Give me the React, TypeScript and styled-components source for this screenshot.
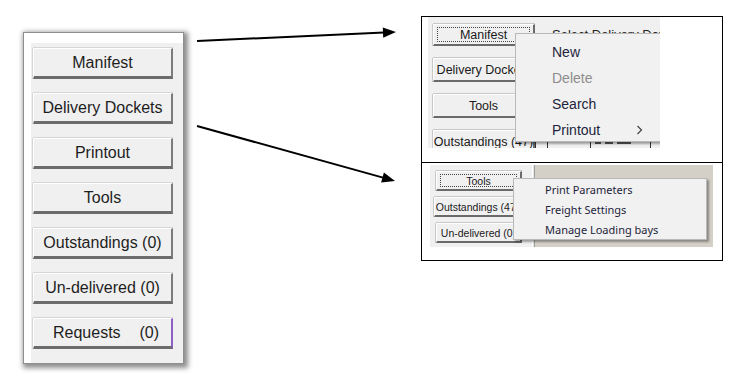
import React from 'react';
import styled, { createGlobalStyle } from 'styled-components';

const GlobalStyle = createGlobalStyle`
  html, body {
    margin: 0;
    padding: 0;
    background: #ffffff;
  }
  body {
    font-family: "Liberation Sans", Arial, sans-serif;
  }
`;

const Page = styled.div`
  width: 739px;
  height: 387px;
  box-sizing: border-box;
  padding: 16px 0 0 24px;
  display: flex;
  align-items: flex-start;
  overflow: hidden;
`;

/* ---------- left: the big button panel ---------- */

const Frame = styled.div`
  margin-top: 17px;
  width: 159px;
  height: 330px;
  box-sizing: border-box;
  background: #f0f0f0;
  border-top: 10px solid #ffffff;
  border-left: 7px solid #ffffff;
  box-shadow: 0 0 0 1px #8e8e8e, 2px 2px 5px 3px rgba(0, 0, 0, 0.45);
  padding: 5px 0 0 2px;
  display: flex;
  flex-direction: column;
  gap: 14px;
`;

const BigButton = styled.div<{ $accent?: string; $split?: boolean }>`
  width: 140px;
  height: 31px;
  box-sizing: border-box;
  background: #f0f0f0;
  border-top: 1px solid #ffffff;
  border-left: 1px solid #ffffff;
  border-right: 2px solid ${p => p.$accent || '#7c7c7c'};
  border-bottom: 3px solid #6c6c6c;
  box-shadow: 0 -1px 0 #d6d6d6, -1px 0 0 #d6d6d6;
  display: flex;
  align-items: center;
  justify-content: ${p => (p.$split ? 'space-between' : 'center')};
  padding: ${p => (p.$split ? '0 12px 0 19px' : '0')};
  font-size: 16px;
  color: #1e1e1e;
  white-space: nowrap;
`;

/* ---------- middle: arrows ---------- */

const Arrows = styled.svg`
  flex-shrink: 0;
`;

/* ---------- right: the two screenshots ---------- */

const Shots = styled.div`
  width: 302px;
  display: flex;
  flex-direction: column;
`;

const ShotBox = styled.div<{ $h: number; $first?: boolean }>`
  height: ${p => p.$h}px;
  box-sizing: border-box;
  border: 1px solid #000000;
  border-top: ${p => (p.$first ? '1px solid #000000' : 'none')};
`;

const Crop = styled.div<{ $w: number; $h: number; $ml: number; $mt: number }>`
  position: relative;
  overflow: hidden;
  width: ${p => p.$w}px;
  height: ${p => p.$h}px;
  margin-left: ${p => p.$ml}px;
  margin-top: ${p => p.$mt}px;
  background: #f0f0f0;
  display: flex;
`;

const ButtonCol = styled.div<{ $pad: string; $gap: number; $w: number }>`
  width: ${p => p.$w}px;
  flex-shrink: 0;
  box-sizing: border-box;
  padding: ${p => p.$pad};
  display: flex;
  flex-direction: column;
  gap: ${p => p.$gap}px;
`;

const SmallButton = styled.div<{ $w: number; $h: number; $size: number; $indent?: number }>`
  position: relative;
  width: ${p => p.$w}px;
  height: ${p => p.$h}px;
  margin-left: ${p => p.$indent || 0}px;
  box-sizing: border-box;
  flex-shrink: 0;
  background: #f0f0f0;
  border-top: 1px solid #ffffff;
  border-left: 1px solid #ffffff;
  border-right: 2px solid #6a6a6a;
  border-bottom: 2px solid #6a6a6a;
  box-shadow: 0 -1px 0 #c8c8c8, -1px 0 0 #c8c8c8;
  display: flex;
  align-items: center;
  justify-content: center;
  font-size: ${p => p.$size}px;
  color: #1a1a1a;
  white-space: nowrap;
  overflow: hidden;
`;

const Focus = styled.span`
  position: absolute;
  inset: 2px 3px 2px 3px;
  border: 1px dotted #444444;
  pointer-events: none;
`;

const RightPane = styled.div`
  flex: 1;
  display: flex;
  flex-direction: column;
  justify-content: space-between;
`;

const DateLabel = styled.div`
  margin: 10px 0 0 17px;
  font-size: 13px;
  color: #222222;
  white-space: nowrap;
`;

const TableStrip = styled.div`
  height: 6px;
  display: flex;
`;

const StripCell = styled.div<{ $w: number; $ink?: boolean }>`
  width: ${p => p.$w}px;
  height: 6px;
  box-sizing: border-box;
  border-left: 1px solid #333333;
  background: ${p =>
    p.$ink
      ? 'linear-gradient(90deg, transparent 4px, #555 4px, #555 10px, transparent 10px, transparent 14px, #555 14px, #555 22px, transparent 22px, transparent 26px, #555 26px, #555 40px, transparent 40px)'
      : 'transparent'};
  background-size: 100% 2px;
  background-repeat: no-repeat;
`;

const Menu = styled.div<{ $left: number; $top: number; $w: number; $h: number; $pad: number }>`
  position: absolute;
  left: ${p => p.$left}px;
  top: ${p => p.$top}px;
  width: ${p => p.$w}px;
  height: ${p => p.$h}px;
  box-sizing: border-box;
  padding-top: ${p => p.$pad}px;
  background: #f1f1f1;
  border: 1px solid #b8b8b8;
  box-shadow: 2px 2px 2px rgba(0, 0, 0, 0.35);
`;

const MenuItem = styled.div<{ $h: number; $indent: number; $size: number; $muted?: boolean; $font?: string }>`
  height: ${p => p.$h}px;
  display: flex;
  align-items: center;
  padding-left: ${p => p.$indent}px;
  font-family: ${p => p.$font || '"Liberation Sans", Arial, sans-serif'};
  font-size: ${p => p.$size}px;
  color: ${p => (p.$muted ? '#8d8d8d' : '#1d1f3c')};
  white-space: nowrap;
`;

const SubArrow = styled.svg`
  margin-left: 36px;
`;

const Divider = styled.div`
  width: 3px;
  flex-shrink: 0;
  border-left: 1px solid #ffffff;
  border-right: 1px solid #a0a0a0;
  box-sizing: border-box;
  background: #e4e4e4;
`;

const GreyArea = styled.div`
  flex: 1;
  background: #d4d0c8;
`;

const topMenu = [
  { label: 'New' },
  { label: 'Delete', muted: true },
  { label: 'Search' },
  { label: 'Printout', sub: true },
];

const toolMenu = ['Print Parameters', 'Freight Settings', 'Manage Loading bays'];

const App = () => {
  return (
    <>
      <GlobalStyle />
      <Page>
        <Frame>
          <BigButton>Manifest</BigButton>
          <BigButton>Delivery Dockets</BigButton>
          <BigButton>Printout</BigButton>
          <BigButton>Tools</BigButton>
          <BigButton>Outstandings (0)</BigButton>
          <BigButton>Un-delivered (0)</BigButton>
          <BigButton $accent="#8b5fc4" $split>
            <span>Requests</span>
            <span>(0)</span>
          </BigButton>
        </Frame>

        <Arrows width="238" height="180" viewBox="0 0 238 180">
          <line x1="14" y1="25" x2="201" y2="16.6" stroke="#000" strokeWidth="2" />
          <polygon points="213,16 200.2,21.8 199.8,11.4" fill="#000" />
          <line x1="14" y1="110" x2="200" y2="161.6" stroke="#000" strokeWidth="2" />
          <polygon points="212,165 198.1,166.5 200.9,156.5" fill="#000" />
        </Arrows>

        <Shots>
          <ShotBox $h={147} $first>
            <Crop $w={232} $h={131} $ml={6} $mt={0}>
              <ButtonCol $w={107} $pad="7px 0 0 5px" $gap={12}>
                <SmallButton $w={102} $h={22} $size={12.5}>
                  Manifest
                  <Focus />
                </SmallButton>
                <SmallButton $w={102} $h={24} $size={12.5}>
                  Delivery Dockets
                </SmallButton>
                <SmallButton $w={102} $h={24} $size={12.5}>
                  Tools
                </SmallButton>
                <SmallButton $w={102} $h={24} $size={12.5}>
                  Outstandings (47)
                </SmallButton>
              </ButtonCol>
              <RightPane>
                <DateLabel>Select Delivery Date</DateLabel>
                <TableStrip>
                  <StripCell $w={12} />
                  <StripCell $w={43} />
                  <StripCell $w={60} $ink />
                  <StripCell $w={10} />
                </TableStrip>
              </RightPane>
              <Menu $left={87} $top={16} $w={170} $h={109} $pad={5}>
                {topMenu.map(item => (
                  <MenuItem key={item.label} $h={26} $indent={36} $size={14} $muted={item.muted}>
                    {item.label}
                    {item.sub && (
                      <SubArrow width="7" height="10" viewBox="0 0 7 10">
                        <polyline points="1.5,1 5.5,5 1.5,9" fill="none" stroke="#444" strokeWidth="1.2" />
                      </SubArrow>
                    )}
                  </MenuItem>
                ))}
              </Menu>
            </Crop>
          </ShotBox>

          <ShotBox $h={98}>
            <Crop $w={283} $h={82} $ml={8} $mt={2}>
              <ButtonCol $w={102} $pad="6px 0 0 4px" $gap={6}>
                <SmallButton $w={86} $h={20} $size={10.5} $indent={2}>
                  Tools
                  <Focus />
                </SmallButton>
                <SmallButton $w={88} $h={20} $size={10.5}>
                  Outstandings (47)
                </SmallButton>
                <SmallButton $w={86} $h={20} $size={10.5} $indent={2}>
                  Un-delivered (0)
                </SmallButton>
              </ButtonCol>
              <Divider />
              <GreyArea />
              <Menu $left={83} $top={13} $w={194} $h={62} $pad={0}>
                {toolMenu.map(label => (
                  <MenuItem key={label} $h={20} $indent={31} $size={11} $font={'"Noto Sans", "Liberation Sans", sans-serif'}>
                    {label}
                  </MenuItem>
                ))}
              </Menu>
            </Crop>
          </ShotBox>
        </Shots>
      </Page>
    </>
  );
};

export default App;
